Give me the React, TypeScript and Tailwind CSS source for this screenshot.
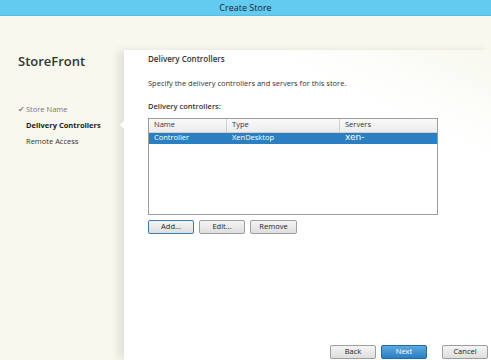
import React from "react";

const font = { fontFamily: '"Open Sans", "Noto Sans", sans-serif' };

function Btn({ children, w = "w-[46px]", variant = "normal" }: { children: React.ReactNode; w?: string; variant?: "normal" | "focus" | "primary" }) {
  const base = "h-[14px] flex items-center justify-center text-[7.5px] rounded-[2px] border leading-none";
  const cls =
    variant === "primary"
      ? "border-[#1f6aa8] bg-gradient-to-b from-[#5aa8e0] to-[#2a7fc2] text-white"
      : variant === "focus"
      ? "border-[#3b7cb4] bg-gradient-to-b from-[#f4f4f4] to-[#dedede] text-[#222]"
      : "border-[#9e9e9e] bg-gradient-to-b from-[#f4f4f4] to-[#dedede] text-[#222]";
  return <div className={`${base} ${cls} ${w}`}>{children}</div>;
}

export default function App() {
  return (
    <div className="w-[491px] h-[360px] flex flex-col bg-[#f8f8ef] overflow-hidden" style={font}>
      <div className="h-[16px] shrink-0 bg-[#63cbef] border-b border-[#59bbe3] flex items-center justify-center text-[9px] text-[#17252e]">
        Create Store
      </div>
      <div className="flex flex-1">
        <div className="w-[124px] shrink-0 relative">
          <div className="pl-[18px] pt-[36px] text-[13px] font-semibold text-[#333]">StoreFront</div>
          <div className="pl-[18px] pt-[32px] flex flex-col gap-[5px] text-[7.5px]">
            <div className="flex items-center text-[#777]">
              <span className="w-[8px] text-[#888]">✔</span>Store Name
            </div>
            <div className="pl-[8px] font-bold text-[#222]">Delivery Controllers</div>
            <div className="pl-[8px] text-[#333]">Remote Access</div>
          </div>
        </div>
        <div className="flex-1 mt-[34px] bg-[linear-gradient(205deg,#f8f8ef_0%,#ffffff_22%)] relative flex flex-col shadow-[-6px_0_8px_rgba(0,0,0,0.09)]">
          <div className="absolute left-[-4px] top-[71px] w-0 h-0 border-y-[4px] border-y-transparent border-r-[4px] border-r-white" />
          <div className="pl-[24px] pt-[3px] flex flex-col">
            <div className="text-[8px] font-semibold text-[#333]">Delivery Controllers</div>
            <div className="pt-[13px] text-[7.5px] text-[#333]">Specify the delivery controllers and servers for this store.</div>
            <div className="pt-[12px] text-[7.5px] font-semibold text-[#333]">Delivery controllers:</div>
            <div className="mt-[5px] w-[290px] h-[97px] border border-[#9c9c9c] bg-white flex flex-col">
              <div className="h-[14px] flex bg-gradient-to-b from-[#fafafa] to-[#ececec] border-b border-[#cfcfcf] text-[7.5px] text-[#333]">
                <div className="w-[78px] pl-[5px] flex items-center border-r border-[#cfcfcf]">Name</div>
                <div className="w-[113px] pl-[5px] flex items-center border-r border-[#cfcfcf]">Type</div>
                <div className="flex-1 pl-[5px] flex items-center">Servers</div>
              </div>
              <div className="h-[11px] flex bg-[#2a7fc3] text-white text-[7.5px]">
                <div className="w-[78px] pl-[5px] flex items-center">Controller</div>
                <div className="w-[113px] pl-[5px] flex items-center">XenDesktop</div>
                <div className="flex-1 pl-[5px] flex items-center text-[9px] leading-none pb-[2px]" style={{ fontFamily: '"DejaVu Sans", sans-serif' }}>xen-</div>
              </div>
            </div>
            <div className="mt-[5px] flex gap-[5px]">
              <Btn variant="focus">Add...</Btn>
              <Btn>Edit...</Btn>
              <Btn w="w-[47px]">Remove</Btn>
            </div>
          </div>
          <div className="mt-auto mb-[1px] pr-[3px] flex justify-end">
            <Btn>Back</Btn>
            <div className="w-[5px]" />
            <Btn variant="primary">Next</Btn>
            <div className="w-[15px]" />
            <Btn>Cancel</Btn>
          </div>
        </div>
      </div>
    </div>
  );
}
